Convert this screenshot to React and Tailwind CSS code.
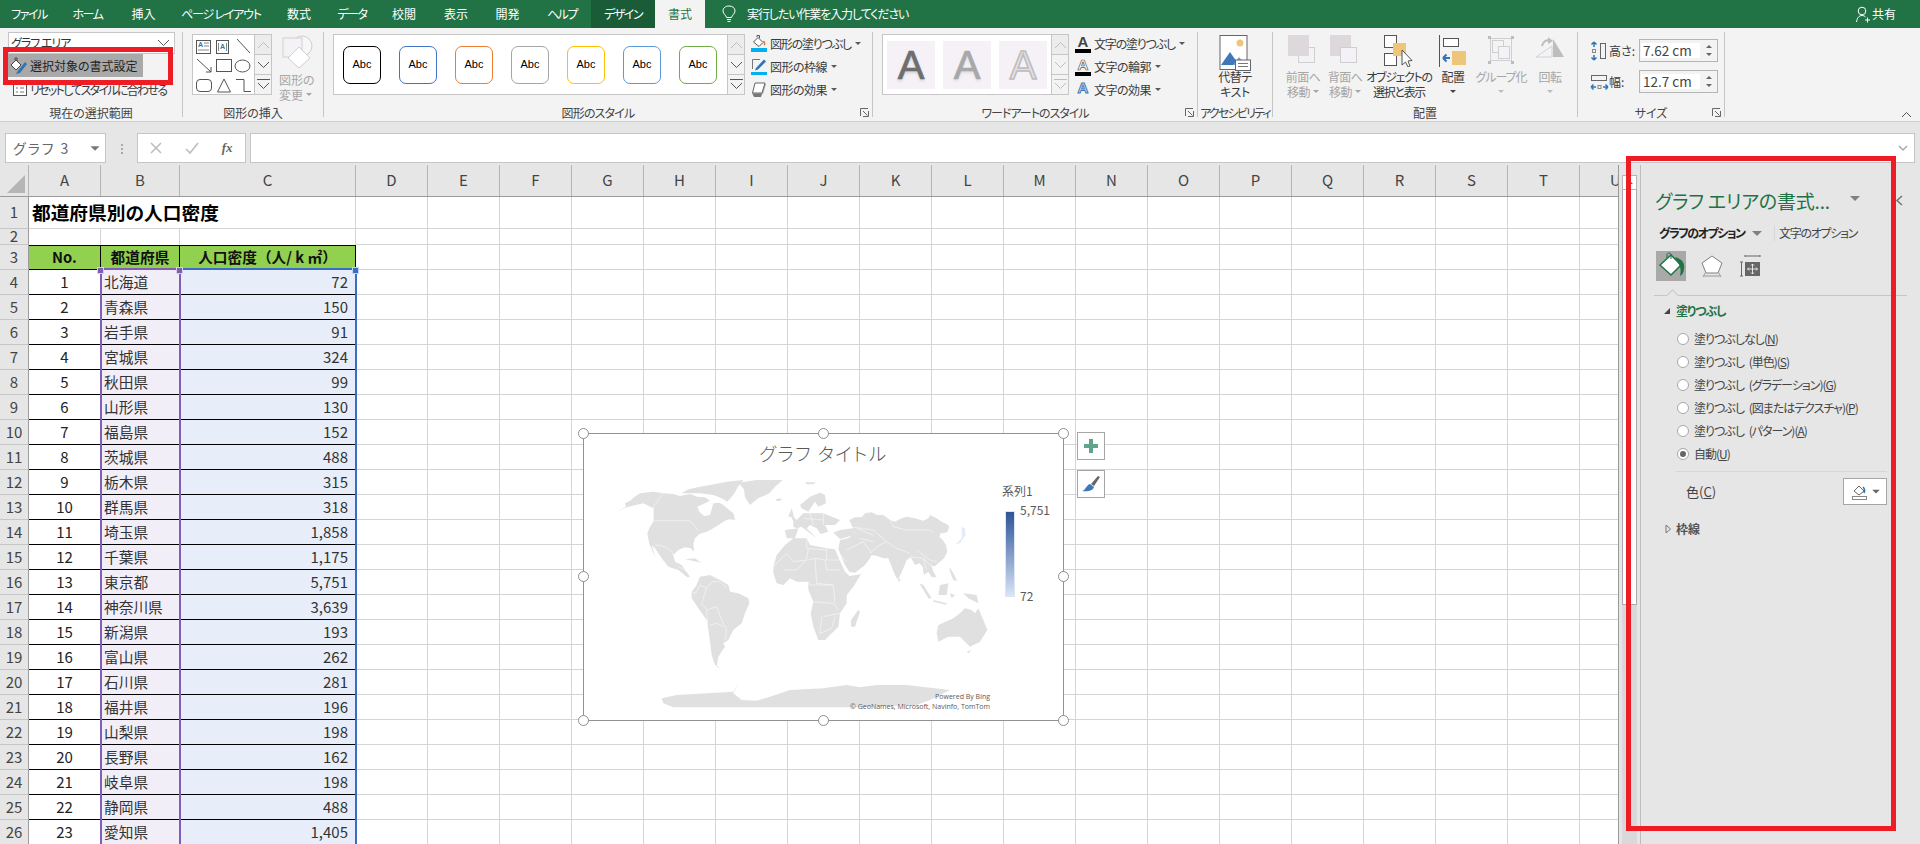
import React from 'react';

const JP = '"Noto Sans CJK JP", sans-serif';

const tabs = [
  ['ファイル', 'w-[58px] tracking-[-1.5px]'],
  ['ホーム', 'w-[59px] tracking-[-1.5px]'],
  ['挿入', 'w-[53px]'],
  ['ページ レイアウト', 'w-[102px] tracking-[-1.2px]'],
  ['数式', 'w-[54px]'],
  ['データ', 'w-[52px] tracking-[-1.5px]'],
  ['校閲', 'w-[52px]'],
  ['表示', 'w-[52px]'],
  ['開発', 'w-[51px]'],
  ['ヘルプ', 'w-[58px] tracking-[-1.5px]'],
];

const prefectures = [
  ['北海道', '72'], ['青森県', '150'], ['岩手県', '91'], ['宮城県', '324'], ['秋田県', '99'], ['山形県', '130'],
  ['福島県', '152'], ['茨城県', '488'], ['栃木県', '315'], ['群馬県', '318'], ['埼玉県', '1,858'], ['千葉県', '1,175'],
  ['東京都', '5,751'], ['神奈川県', '3,639'], ['新潟県', '193'], ['富山県', '262'], ['石川県', '281'], ['福井県', '196'],
  ['山梨県', '198'], ['長野県', '162'], ['岐阜県', '198'], ['静岡県', '488'], ['愛知県', '1,405'],
];

const extraCols = ['D', 'E', 'F', 'G', 'H', 'I', 'J', 'K', 'L', 'M', 'N', 'O', 'P', 'Q', 'R', 'S', 'T', 'U'];

const Caret = ({ className = 'border-t-[#595959]' }) => (
  <span className={`inline-block w-0 h-0 border-x-[3px] border-x-transparent border-t-[3px] ${className}`} />
);

const Launcher = () => (
  <svg width="9" height="9" viewBox="0 0 9 9" className="text-[#666]">
    <path d="M0.5 8V0.5H8M8.5 8.5H3M8.5 8.5V3M3 3L7.5 7.5" fill="none" stroke="currentColor" />
  </svg>
);

const GalleryScroll = ({ disabled = false }) => {
  const stroke = disabled ? '#bdbdbd' : '#555';
  return (
    <div className="w-[17px] h-[61px] flex flex-col border border-l-0 border-[#c6c6c6] bg-[#f3f3f3]">
      <div className="h-[20px] flex items-center justify-center border-b border-[#c6c6c6] bg-[#ececec]">
        <svg width="13" height="8" viewBox="0 0 13 8"><path d="M1 7L6.5 1.5L12 7" fill="none" stroke="#bdbdbd" /></svg>
      </div>
      <div className="h-[20px] flex items-center justify-center border-b border-[#c6c6c6]">
        <svg width="13" height="8" viewBox="0 0 13 8"><path d="M1 1L6.5 6.5L12 1" fill="none" stroke={stroke} /></svg>
      </div>
      <div className="flex-1 flex flex-col items-center justify-center gap-[2px]">
        <div className="w-[13px] h-px" style={{ background: stroke }} />
        <svg width="13" height="8" viewBox="0 0 13 8"><path d="M1 1L6.5 6.5L12 1" fill="none" stroke={stroke} /></svg>
      </div>
    </div>
  );
};

const ShapeGalleryIcons = () => (
  <svg width="62" height="61" viewBox="0 0 62 61" fill="none" stroke="#555">
    <rect x="3.5" y="5.5" width="14" height="13" />
    <text x="5" y="12" fontSize="7" fontWeight="700" fill="#2e75b6" stroke="none" fontFamily="Liberation Sans">A</text>
    <path d="M11 8H16M11 11H16M5 15H16" stroke="#888" />
    <rect x="23.5" y="5.5" width="12" height="13" />
    <path d="M25.5 8V16M33.5 8V16" stroke="#888" />
    <text x="27" y="14" fontSize="7" fontWeight="700" fill="#2e75b6" stroke="none" fontFamily="Liberation Sans">A</text>
    <path d="M44 4L57 18M4 24L18 37M18 37V32M18 37H13" />
    <rect x="23.5" y="24.5" width="15" height="12" />
    <ellipse cx="49.5" cy="31" rx="7.5" ry="6" />
    <rect x="3.5" y="44.5" width="15" height="12" rx="3.5" />
    <path d="M31 44L37.5 57H24.5Z" />
    <path d="M43 44.5H51V56.5H58" />
  </svg>
);

const CommandRow = ({ icon, label, tight = 'tracking-[-0.5px]' }) => (
  <div className="h-[23px] flex items-center">
    <div className="w-[19px] shrink-0 flex justify-start">{icon}</div>
    <span className={`text-[12px] whitespace-nowrap text-[#3a3a3a] ${tight}`}>{label}</span>
    <span className="ml-[4px] flex"><Caret /></span>
  </div>
);

const ShapeFillIcon = () => (
  <svg width="16" height="19" viewBox="0 0 16 19" fill="none">
    <path d="M2.5 8L7 3.5L12 8.5L8 12.5Z" fill="#fff" stroke="#555" />
    <path d="M6 3V1.5H8.5V4" stroke="#555" />
    <path d="M12.5 7C14 9 14 10.5 13 11" stroke="#e07b39" strokeWidth="1.5" />
    <rect y="14" width="16" height="4" fill="#00b0f0" />
  </svg>
);

const ShapeLineIcon = () => (
  <svg width="16" height="19" viewBox="0 0 16 19" fill="none">
    <path d="M1.5 12V2.5H9" stroke="#777" />
    <path d="M5 11L13 2.5L15 4.5L7 12.5L4 13.5Z" fill="#2e75b6" />
    <rect y="15" width="16" height="3" fill="#00b0f0" />
  </svg>
);

const ShapeEffectIcon = () => (
  <svg width="16" height="16" viewBox="0 0 16 16">
    <path d="M4 2H15L12 12H1Z" fill="#aaa" />
    <path d="M4 1H14L11 11H1.5Z" fill="#fff" stroke="#666" />
    <path d="M1.5 12H11L10 15H3Z" fill="#777" />
  </svg>
);

const TextLetterIcon = ({ bar = true, outlined = false, blue = false }) => (
  <div className="relative w-[16px] h-[19px] flex justify-center">
    <span
      className={`font-bold text-[15px] leading-[16px] ${blue ? 'text-[#dbe7f5] [-webkit-text-stroke:1px_#3f78b8]' : outlined ? 'text-white [-webkit-text-stroke:0.7px_#555]' : 'text-[#444]'}`}
      style={{ fontFamily: '"Liberation Sans"' }}
    >
      A
    </span>
    {bar && <div className="absolute left-0 right-0 bottom-0 h-[4px] bg-black" />}
  </div>
);

const AltTextIcon = () => (
  <svg width="32" height="36" viewBox="0 0 32 36">
    <rect x="1" y="0.5" width="27" height="34" fill="#fff" stroke="#666" />
    <circle cx="21" cy="8" r="3.5" fill="#eec67a" />
    <path d="M2 30L11 17L20 30Z" fill="#3f78b8" />
    <path d="M14 30L20 22L27 30Z" fill="#7aa5d6" />
    <rect x="16.5" y="25" width="15" height="10.5" fill="#fff" stroke="#666" />
    <path d="M19 28.5H29M19 31.5H29" stroke="#777" />
  </svg>
);

const DisabledStack = ({ front }) => (
  <svg width="30" height="31" viewBox="0 0 30 31">
    {front ? (
      <>
        <rect x="10.5" y="12.5" width="16" height="15" fill="#f4f2f6" stroke="#cfcfcf" />
        <rect x="0" y="0" width="21" height="21" fill="#dcd8dc" />
      </>
    ) : (
      <>
        <rect x="0" y="0" width="21" height="21" fill="#dcd8dc" />
        <rect x="10.5" y="12.5" width="16" height="15" fill="#f4f2f6" stroke="#cfcfcf" />
      </>
    )}
  </svg>
);

const SelectionPaneIcon = () => (
  <svg width="30" height="32" viewBox="0 0 30 32">
    <rect x="0.5" y="0.5" width="12" height="12" fill="#fff" stroke="#555" />
    <rect x="0.5" y="18.5" width="12" height="12" fill="#fff" stroke="#555" />
    <rect x="9" y="8" width="13" height="13" fill="#eec67a" />
    <path d="M18 15V30L21.5 27L24 32L26 31L24 26L28 25.5Z" fill="#fff" stroke="#555" />
  </svg>
);

const AlignIcon = () => (
  <svg width="28" height="32" viewBox="0 0 28 32">
    <path d="M0.5 0V32" stroke="#555" />
    <rect x="4.5" y="3.5" width="15" height="8" fill="#fff" stroke="#555" />
    <rect x="13" y="16" width="14" height="14" fill="#eec67a" />
    <path d="M11 23H4M4 23L7.5 19.5M4 23L7.5 26.5" fill="none" stroke="#2e75b6" strokeWidth="2" />
  </svg>
);

const GroupIcon = () => (
  <svg width="28" height="30" viewBox="0 0 28 30" fill="none" stroke="#cfcfcf">
    <rect x="3.5" y="3.5" width="21" height="22" />
    <rect x="5.5" y="5.5" width="11" height="12" fill="#f4f2f6" />
    <rect x="11.5" y="11.5" width="11" height="12" fill="#f4f2f6" />
    <g fill="#bdbdbd" stroke="none">
      <rect x="1" y="1" width="3" height="3" /><rect x="24" y="1" width="3" height="3" />
      <rect x="1" y="26" width="3" height="3" /><rect x="24" y="26" width="3" height="3" />
    </g>
  </svg>
);

const RotateIcon = () => (
  <svg width="30" height="30" viewBox="0 0 30 30">
    <path d="M18 4L29 22H18Z" fill="#bdbdbd" />
    <path d="M1 22L17 11V22Z" fill="#f4f2f6" stroke="#d2d2d2" />
    <path d="M7 11C8 6 12 4 16 6" fill="none" stroke="#bdbdbd" strokeWidth="2" />
    <path d="M13 2L18 6L13 9Z" fill="#bdbdbd" />
  </svg>
);

const LargeButton = ({ width, icon, lines, dark, caret = true, soloCaret = false, tight = 'tracking-[-0.5px]' }) => (
  <div className={`${width} flex flex-col items-center`}>
    <div className="h-[36px] pt-[3px] flex items-start justify-center">{icon}</div>
    <div className={`mt-[1px] text-[12px] leading-[15px] text-center whitespace-nowrap ${tight} ${dark ? 'text-[#3a3a3a]' : 'text-[#a6a6a6]'}`}>
      <div>{lines[0]}</div>
      {lines[1] ? (
        <div className="flex items-center justify-center gap-[3px]">
          <span>{lines[1]}</span>
          {caret && <Caret className="border-t-[#a6a6a6]" />}
        </div>
      ) : (
        soloCaret && (
          <div className="h-[15px] flex items-center justify-center">
            <Caret className={dark ? 'border-t-[#444]' : 'border-t-[#bdbdbd]'} />
          </div>
        )
      )}
    </div>
  </div>
);

const SizeInput = ({ value }) => (
  <div className="w-[79px] h-[23px] border border-[#b5b5b5] flex bg-[#f3f3f3]">
    <div className="w-[59px] my-[3px] ml-px bg-white text-[13.5px] leading-[15px] text-[#444] flex items-center pl-[2px]">{value}</div>
    <div className="flex-1 flex flex-col items-center justify-center gap-[5px]">
      <span className="w-0 h-0 border-x-[3px] border-x-transparent border-b-[3px] border-b-[#666]" />
      <span className="w-0 h-0 border-x-[3px] border-x-transparent border-t-[3px] border-t-[#666]" />
    </div>
  </div>
);

const Group = ({ width, label, launcher, tight = '', children }) => (
  <div className={`${width} h-[85px] mt-[4px] border-r border-[#c6c6c6] flex flex-col shrink-0`}>
    <div className="h-[72px] shrink-0">{children}</div>
    <div className={`relative h-[18px] shrink-0 flex items-center justify-center text-[12px] text-[#444] whitespace-nowrap ${tight}`}>
      {label}
      {launcher && <div className="absolute right-[3px] bottom-[5px] flex"><Launcher /></div>}
    </div>
  </div>
);

const Ribbon = () => (
  <div className="h-[93px] bg-[#f3f3f3] flex">
    <Group width="w-[183px]" label="現在の選択範囲">
      <div className="pl-[8px]">
        <div className="w-[167px] h-[22px] bg-white border border-[#c6c6c6] flex items-center justify-between pl-[2px] pr-[4px] text-[12px] tracking-[-1px] text-[#333]">
          <span>グラフ エリア</span>
          <svg width="13" height="8" viewBox="0 0 13 8"><path d="M1 1L6.5 6.5L12 1" fill="none" stroke="#555" /></svg>
        </div>
        <div className="w-[135px] h-[23px] bg-[#a9a9a9] flex items-center text-[12px] text-[#222]">
          <svg width="20" height="18" viewBox="0 0 20 18" className="mr-[2px] shrink-0">
            <path d="M3 8L8 3L13 8L8 13Z" fill="#fff" stroke="#444" />
            <path d="M7 3V1H9V4" stroke="#444" fill="none" />
            <path d="M9 15L17 5L19 7L12 16L8 17Z" fill="#2e75b6" />
          </svg>
          選択対象の書式設定
        </div>
        <div className="h-[21px] mt-[2px] flex items-center text-[12px] tracking-[-1.7px] text-[#3a3a3a] whitespace-nowrap">
          <svg width="20" height="16" viewBox="0 0 20 16" className="mr-[2px] shrink-0">
            <rect x="0" y="0" width="5" height="3" fill="#2e75b6" />
            <rect x="5.5" y="2.5" width="13" height="11" fill="#fff" stroke="#555" />
            <path d="M8 6H10M12 6H16M8 10H10M12 10H16" stroke="#777" />
          </svg>
          リセットしてスタイルに合わせる
        </div>
      </div>
    </Group>

    <Group width="w-[141px]" label="図形の挿入">
      <div className="flex pl-[9px] pt-[2px]">
        <div className="w-[63px] h-[61px] bg-white border border-[#c6c6c6]"><ShapeGalleryIcons /></div>
        <GalleryScroll />
        <div className="ml-[7px] flex flex-col items-center">
          <svg width="34" height="35" viewBox="0 0 34 35" fill="none" stroke="#cfcfcf">
            <circle cx="22" cy="12" r="10" fill="#f7f7f7" />
            <rect x="3" y="4" width="19" height="19" fill="#f4f2f6" />
            <path d="M19 13L30 24L19 34L8 24Z" fill="#fff" />
          </svg>
          <div className="mt-[3px] text-[12px] leading-[15px] text-[#a6a6a6] text-center whitespace-nowrap">
            図形の
            <div className="flex items-center gap-[3px]">変更 <Caret className="border-t-[#a6a6a6]" /></div>
          </div>
        </div>
      </div>
    </Group>

    <Group width="w-[549px]" label="図形のスタイル" launcher tight="tracking-[-0.8px]">
      <div className="flex pl-[9px] pt-[2px]">
        <div className="w-[395px] h-[61px] bg-white border border-[#c6c6c6] flex items-center gap-[18px] pl-[9px]">
          {['border-black', 'border-[#4472c4]', 'border-[#ed7d31]', 'border-[#a5a5a5]', 'border-[#ffc000]', 'border-[#5b9bd5]', 'border-[#70ad47]'].map((c) => (
            <div key={c} className={`w-[38px] h-[38px] rounded-[7px] border-[1.5px] ${c} flex items-center justify-center text-[11px] text-black`} style={{ fontFamily: '"Liberation Sans"' }}>
              Abc
            </div>
          ))}
        </div>
        <GalleryScroll />
        <div className="ml-[6px] -mt-[2px] flex flex-col">
          <CommandRow icon={<ShapeFillIcon />} label="図形の塗りつぶし" tight="tracking-[-1.2px]" />
          <CommandRow icon={<ShapeLineIcon />} label="図形の枠線" />
          <CommandRow icon={<ShapeEffectIcon />} label="図形の効果" />
        </div>
      </div>
    </Group>

    <Group width="w-[325px]" label="ワードアートのスタイル" launcher tight="tracking-[-1px]">
      <div className="flex pl-[9px] pt-[2px]">
        <div className="w-[170px] h-[61px] bg-white border border-[#c6c6c6] flex items-center gap-[8px] pl-[4px]">
          {[
            'text-[#6e6e6e] [-webkit-text-stroke:0.7px_#6e6e6e] [text-shadow:0_2px_3px_#d0d0d0]',
            'text-[#a8a8a8] [-webkit-text-stroke:0.7px_#a8a8a8] [text-shadow:0_2px_3px_#dcdcdc]',
            'text-[#e2e0e4] [-webkit-text-stroke:1.5px_#bcbcbc]',
          ].map((c) => (
            <div key={c} className={`w-[48px] h-[48px] bg-[#f5f1f7] flex items-center justify-center text-[40px] leading-none tracking-normal ${c}`} style={{ fontFamily: '"Liberation Sans"' }}>
              A
            </div>
          ))}
        </div>
        <GalleryScroll disabled />
        <div className="ml-[6px] -mt-[2px] flex flex-col">
          <CommandRow icon={<TextLetterIcon />} label="文字の塗りつぶし" tight="tracking-[-1.2px]" />
          <CommandRow icon={<TextLetterIcon outlined />} label="文字の輪郭" />
          <CommandRow icon={<TextLetterIcon bar={false} blue />} label="文字の効果" />
        </div>
      </div>
    </Group>

    <Group width="w-[75px]" label="アクセシビリティ" tight="tracking-[-1.8px]">
      <LargeButton width="w-full" icon={<AltTextIcon />} lines={['代替テ', 'キスト']} dark caret={false} />
    </Group>

    <Group width="w-[305px]" label="配置">
      <div className="flex pl-[9px]">
        <LargeButton width="w-[42px]" icon={<DisabledStack front />} lines={['前面へ', '移動']} />
        <LargeButton width="w-[42px]" icon={<DisabledStack />} lines={['背面へ', '移動']} />
        <LargeButton width="w-[66px]" icon={<SelectionPaneIcon />} lines={['オブジェクトの', '選択と表示']} dark caret={false} tight="tracking-[-1.3px]" />
        <LargeButton width="w-[42px]" icon={<AlignIcon />} lines={['配置']} dark soloCaret />
        <LargeButton width="w-[54px]" icon={<GroupIcon />} lines={['グループ化']} soloCaret tight="tracking-[-1px]" />
        <LargeButton width="w-[44px]" icon={<RotateIcon />} lines={['回転']} soloCaret />
      </div>
    </Group>

    <Group width="w-[147px]" label="サイズ" launcher>
      <div className="pl-[12px] pt-[7px] flex flex-col gap-[8px]">
        <div className="flex items-center">
          <svg width="19" height="20" viewBox="0 0 19 20" fill="none" className="shrink-0">
            <rect x="10.5" y="2.5" width="5" height="15" stroke="#666" />
            <path d="M4 1V6M4 1L1.5 3.5M4 1L6.5 3.5M4 19V14M4 19L1.5 16.5M4 19L6.5 16.5" stroke="#2e75b6" strokeWidth="1.5" />
            <rect x="2.5" y="8.5" width="3" height="3" stroke="#888" />
          </svg>
          <span className="w-[30px] text-[12px] text-[#3a3a3a]">高さ:</span>
          <SizeInput value="7.62 cm" />
        </div>
        <div className="flex items-center">
          <svg width="19" height="20" viewBox="0 0 19 20" fill="none" className="shrink-0">
            <rect x="1.5" y="3.5" width="15" height="5" stroke="#666" />
            <path d="M1 15H6M1 15L3.5 12.5M1 15L3.5 17.5M18 15H13M18 15L15.5 12.5M18 15L15.5 17.5" stroke="#2e75b6" strokeWidth="1.5" />
            <rect x="8" y="13.5" width="3" height="3" stroke="#888" />
          </svg>
          <span className="w-[30px] text-[12px] text-[#3a3a3a]">幅:</span>
          <SizeInput value="12.7 cm" />
        </div>
      </div>
    </Group>

    <div className="flex-1 flex items-end justify-end pr-[8px] pb-[3px]">
      <svg width="11" height="7" viewBox="0 0 11 7"><path d="M1 6L5.5 1.5L10 6" fill="none" stroke="#555" /></svg>
    </div>
  </div>
);

const FormulaBar = () => (
  <div className="h-[44px] bg-[#e6e6e6] border-t border-[#d0d0d0] flex pt-[11px] pl-[5px] pr-[5px]">
    <div className="w-[101px] h-[30px] bg-white border border-[#c6c6c6] flex items-center justify-between pl-[7px] pr-[7px] text-[14px] tracking-[2px] text-[#666]">
      グラフ 3
      <Caret className="border-t-[#777] scale-150" />
    </div>
    <div className="w-[31px] flex flex-col items-center justify-center gap-[2px]">
      <div className="w-[2px] h-[2px] bg-[#aaa]" />
      <div className="w-[2px] h-[2px] bg-[#aaa]" />
      <div className="w-[2px] h-[2px] bg-[#aaa]" />
    </div>
    <div className="w-[109px] h-[30px] bg-white border border-[#c6c6c6] flex items-center">
      <span className="w-[36px] flex justify-center"><svg width="12" height="12" viewBox="0 0 12 12"><path d="M1 1L11 11M11 1L1 11" stroke="#bdbdbd" strokeWidth="1.6" /></svg></span>
      <span className="w-[36px] flex justify-center"><svg width="14" height="12" viewBox="0 0 14 12"><path d="M1 7L5 11L13 1" fill="none" stroke="#bdbdbd" strokeWidth="1.6" /></svg></span>
      <span className="w-[36px] text-center text-[13px] italic text-[#666] font-bold" style={{ fontFamily: '"Liberation Serif"' }}>fx</span>
    </div>
    <div className="flex-1 ml-[4px] h-[30px] bg-white border border-[#c6c6c6] flex items-center justify-end pr-[6px]">
      <svg width="10" height="7" viewBox="0 0 10 7"><path d="M1 1L5 5L9 1" fill="none" stroke="#aaa" strokeWidth="1.5" /></svg>
    </div>
  </div>
);

const RowHead = ({ n }) => (
  <div className="w-[29px] shrink-0 h-full bg-[#e6e6e6] border-r border-b border-r-[#9b9b9b] border-b-[#c6c6c6] flex items-center justify-center text-[15px] text-[#444] overflow-hidden">
    {n}
  </div>
);

const GridCells = () => (
  <>
    {extraCols.map((c) => (
      <div key={c} className="w-[72px] shrink-0 h-full border-r border-b border-[#d4d4d4]" />
    ))}
  </>
);

const headCell = 'shrink-0 bg-[#92d050] border-t border-r border-t-black border-r-black flex items-center justify-center text-[14.7px] font-bold text-[#111]';

const Sheet = () => (
  <div className="relative w-[1619px] shrink-0 overflow-hidden border-r border-[#999] [font-feature-settings:normal]">
    <div className="h-[32px] flex bg-[#e6e6e6] border-b border-[#9b9b9b] text-[15px] text-[#444]">
      <div className="w-[29px] shrink-0 relative border-r border-[#b5b5b5]">
        <div className="absolute right-[3px] bottom-[3px] w-0 h-0 border-l-[18px] border-l-transparent border-b-[18px] border-b-[#b5b5b5]" />
      </div>
      {[['A', 'w-[72px]'], ['B', 'w-[79px]'], ['C', 'w-[176px]']].map(([c, w]) => (
        <div key={c} className={`${w} shrink-0 border-r border-[#b5b5b5] flex items-center justify-center`}>{c}</div>
      ))}
      {extraCols.map((c) => (
        <div key={c} className="w-[72px] shrink-0 border-r border-[#b5b5b5] flex items-center justify-center">{c}</div>
      ))}
    </div>

    <div className="h-[32px] flex">
      <RowHead n={1} />
      <div className="w-[327px] shrink-0 border-r border-b border-[#d4d4d4] flex items-center pl-[3px] text-[18.7px] font-bold text-black">都道府県別の人口密度</div>
      <GridCells />
    </div>
    <div className="h-[16px] flex">
      <RowHead n={2} />
      <div className="w-[72px] shrink-0 border-r border-[#d4d4d4]" />
      <div className="w-[79px] shrink-0 border-r border-[#d4d4d4]" />
      <div className="w-[176px] shrink-0 border-r border-[#d4d4d4]" />
      <GridCells />
    </div>
    <div className="h-[25px] flex">
      <RowHead n={3} />
      <div className={`w-[72px] border-b border-b-black ${headCell}`}>No.</div>
      <div className={`w-[79px] border-b-[2px] border-b-[#7f5fb5] ${headCell}`}>都道府県</div>
      <div className={`w-[176px] border-b-[2px] border-b-[#3a6cc8] ${headCell}`}>人口密度（人/ k ㎡）</div>
      <GridCells />
    </div>

    {prefectures.map(([name, value], i) => (
      <div key={name} className="h-[25px] flex">
        <RowHead n={i + 4} />
        <div className="w-[71px] shrink-0 border-b border-black flex items-center justify-center text-[15px] text-[#222]">{i + 1}</div>
        <div className="w-[81px] shrink-0 bg-[#f2eef8] border-x-2 border-[#7f5fb5] flex">
          <div className="flex-1 border-b border-black flex items-center pl-[2px] text-[14.7px] text-[#333]">{name}</div>
        </div>
        <div className="w-[176px] shrink-0 bg-[#e8eef9] border-r-2 border-[#3a6cc8] flex">
          <div className="flex-1 border-b border-black flex items-center justify-end pr-[7px] text-[15px] text-[#333]">{value}</div>
        </div>
        <div className="w-[71px] shrink-0 h-full border-r border-b border-[#d4d4d4]" />
        {extraCols.slice(1).map((c) => (
          <div key={c} className="w-[72px] shrink-0 h-full border-r border-b border-[#d4d4d4]" />
        ))}
      </div>
    ))}

    {/* 範囲選択のハンドル */}
    <div className="absolute left-[97px] top-[102px] w-[7px] h-[7px] bg-[#7f5fb5] border border-white/70" />
    <div className="absolute left-[176px] top-[102px] w-[7px] h-[7px] bg-[#7f5fb5] border border-white/70" />
    <div className="absolute left-[352px] top-[102px] w-[7px] h-[7px] bg-[#3a6cc8] border border-white/70" />
  </div>
);

const MapLand = ({ points, fill = '#e0e0e0' }) => <polygon points={points} fill={fill} />;

// 世界地図: 座標はズーム画像(3倍)のまま
const WorldMap = () => (
  <svg viewBox="0 0 1200 750" className="absolute left-[26px] top-[36px] w-[400px] h-[250px]">
    <g>
      <MapLand points="20,125 48,110 45,100 60,92 72,82 90,70 130,65 160,70 190,72 210,78 240,72 262,80 285,82 300,92 285,100 262,110 268,125 282,138 300,135 305,118 310,100 328,98 340,105 355,118 370,130 375,150 358,148 345,152 325,165 305,178 290,185 268,192 255,205 250,220 252,245 242,235 225,232 205,240 190,255 195,275 215,285 225,300 240,320 232,322 205,300 175,290 155,265 135,235 125,225 136,262 118,222 112,190 120,170 130,155 130,115 100,100 50,112" />
      <MapLand points="215,70 235,58 270,50 300,45 350,35 400,30 385,48 372,72 352,95 335,85 310,75 270,70" />
      <MapLand points="385,38 440,30 518,30 495,50 478,70 445,85 420,105 405,82 402,58" />
      <MapLand points="225,268 255,265 275,280 262,275" />
      <MapLand points="270,320 300,315 330,330 355,345 360,365 385,370 415,385 418,400 405,430 395,460 370,480 355,510 340,520 345,530 325,560 320,590 335,595 315,585 305,555 298,500 290,450 265,415 245,385 245,365 260,345" />
      <MapLand points="497,88 515,85 512,92 500,93" />
      <path d="M160,70 L130,110 V150 M130,152 H240 L265,182 M135,225 L165,230 L185,245 L190,256 M205,290 L225,300 M270,345 L290,355 L275,400 L290,420 L295,500 L303,555 M270,345 L258,370 L245,365 M290,355 L305,335 L330,335 L352,355 M290,420 L320,410 L335,450 L350,480 L345,510 M320,460 L340,470 M300,465 L320,460" fill="none" stroke="#fff" strokeWidth="1.5" />
    </g>
    <g transform="translate(540 0)">
      <MapLand points="-50,290 -40,255 -15,225 10,205 50,205 60,225 110,235 135,238 145,262 165,305 178,318 213,313 190,350 170,375 170,400 150,430 145,470 120,495 105,510 85,510 70,470 62,430 70,395 55,360 55,335 20,335 0,325 -20,345 -40,340 -50,310" />
      <MapLand points="205,420 210,425 195,470 183,470 183,450" />
      <MapLand points="-15,180 25,175 15,205 -10,205" />
      <MapLand points="10,155 0,130 20,150 40,130 60,130 100,130 150,150 135,165 105,165 115,185 92,192 80,175 60,165 50,175 80,205 60,190 35,170 20,175 10,170" />
      <MapLand points="30,105 60,80 90,68 105,75 108,100 85,110 75,95 55,125 45,120 35,115" />
      <MapLand points="5,115 12,142 -5,140" />
      <MapLand points="45,37 78,37 70,43 50,43" />
      <MapLand points="178,150 195,142 215,142 225,130 245,127 262,135 280,135 300,150 315,155 335,145 350,140 375,145 400,152 415,145 420,135 440,145 455,155 470,162 478,170 472,185 462,190 452,190 448,200 458,210 468,225 472,245 462,265 445,280 432,290 425,285 430,305 440,322 425,322 415,305 402,315 398,290 388,280 375,285 362,262 350,270 340,295 325,328 318,322 305,290 295,265 280,265 262,258 245,255 240,265 225,285 195,308 178,305 165,285 145,238 150,210 175,205 195,190" />
      <MapLand points="130,188 150,180 190,175 195,195 150,207" />
      <MapLand points="515,170 525,175 527,195 510,220 498,222 515,205" fill="#e4ecf9" />
      <MapLand points="388,340 400,345 425,385 415,385" />
      <MapLand points="430,390 470,400 468,404 430,395" />
      <MapLand points="450,345 475,340 470,375 445,375" />
      <MapLand points="520,370 560,375 565,400 535,385" />
      <MapLand points="480,370 495,375 485,385" />
      <MapLand points="478,290 490,310 502,332 490,330 480,305" />
      <MapLand points="325,322 332,330 325,337" />
      <MapLand points="445,465 490,445 510,430 525,415 545,420 555,430 565,415 580,450 592,480 570,515 540,530 525,515 510,500 475,500 445,515 440,490" />
      <MapLand points="530,545 545,540 535,550" />
      <MapLand points="-385,685 -340,675 -170,665 -155,640 -170,670 -145,690 -100,692 -60,680 0,660 100,655 170,645 210,652 260,645 350,645 480,660 420,690 380,705 200,712 -200,712 -350,712 -380,700" />
      <path d="M-50,290 L-10,250 L10,275 L50,270 L55,235 M50,205 V235 L110,240 M110,235 V270 L150,270 M55,270 L75,265 L105,270 L110,300 L150,300 M75,265 L80,340 L130,345 L135,400 M55,335 L60,345 L130,345 M70,395 L130,400 L145,420 M100,440 L150,430 M95,440 L90,490 L125,475 L135,440 M-20,300 L20,300 L50,270 M150,255 L170,275 M60,130 L70,165 M100,130 L100,165 M40,145 L100,150 M178,170 L250,180 L290,215 L320,235 L360,250 M300,150 L310,170 L350,180 L420,180 L430,190 M290,215 L260,230 L240,250 M210,205 L250,215 M170,240 L220,215 L245,250 M360,260 L400,265 L410,300 M380,240 L420,270 L440,275 M400,265 L430,295 M200,175 L250,195" fill="none" stroke="#fff" strokeWidth="1.5" />
    </g>
  </svg>
);

const Handle = ({ className }) => (
  <div className={`absolute w-[11px] h-[11px] rounded-full bg-white border-[1.5px] border-[#8f8f8f] ${className}`} />
);

const Chart = () => (
  <div className="absolute left-[583px] top-[268px] w-[481px] h-[288px] bg-white border-[1.5px] border-[#929292]">
    <div className="absolute left-0 right-0 top-[6px] text-center text-[18.5px] leading-[26px] font-light text-[#595959] tracking-[1.5px]">グラフ タイトル</div>
    <WorldMap />
    <div className="absolute left-[418px] top-[49px] text-[12px] leading-[16px] text-[#595959]">系列1</div>
    <div className="absolute left-[421px] top-[77px] w-[10px] h-[86px] border border-[#dbe5f4] bg-gradient-to-b from-[#2f5597] to-[#dae5f6]" />
    <div className="absolute left-[436px] top-[68px] text-[12px] leading-[16px] text-[#595959]">5,751</div>
    <div className="absolute left-[436px] top-[154px] text-[12px] leading-[16px] text-[#595959]">72</div>
    <div className="absolute right-[73px] top-[258px] text-[7px] leading-[10px] text-[#595959] text-right whitespace-nowrap" style={{ fontFamily: '"Open Sans"' }}>
      Powered By Bing
      <br />© GeoNames, Microsoft, Navinfo, TomTom
    </div>
    <Handle className="-left-[6px] -top-[6px]" />
    <Handle className="left-[234px] -top-[6px]" />
    <Handle className="-right-[6px] -top-[6px]" />
    <Handle className="-left-[6px] top-[137px]" />
    <Handle className="-right-[6px] top-[137px]" />
    <Handle className="-left-[6px] -bottom-[6px]" />
    <Handle className="left-[234px] -bottom-[6px]" />
    <Handle className="-right-[6px] -bottom-[6px]" />
    <div className="absolute left-[493px] -top-[2px] w-[28px] h-[28px] bg-white border border-[#a6a6a6] flex items-center justify-center">
      <svg width="16" height="16" viewBox="0 0 16 16"><path d="M6 1H10V6H15V10H10V15H6V10H1V6H6Z" fill="#5ea58a" /></svg>
    </div>
    <div className="absolute left-[493px] top-[36px] w-[28px] h-[28px] bg-white border border-[#a6a6a6] flex items-center justify-center">
      <svg width="20" height="20" viewBox="0 0 20 20">
        <path d="M10 10L17 2L19 3L13 12Z" fill="#666" />
        <path d="M1 17C5 16 5 11 9 10L13 13C12 17 6 18 1 17Z" fill="#3f78b8" />
      </svg>
    </div>
  </div>
);

const radios = ['塗りつぶしなし', '塗りつぶし (単色)', '塗りつぶし (グラデーション)', '塗りつぶし (図またはテクスチャ)', '塗りつぶし (パターン)', '自動'];
const radioKeys = ['N', 'S', 'G', 'P', 'A', 'U'];

const Radio = ({ label, hotkey, checked }) => (
  <div className="h-[23px] flex items-center">
    <span className="w-[12px] h-[12px] rounded-full border border-[#a8a8a8] bg-white flex items-center justify-center">
      {checked && <span className="w-[6px] h-[6px] rounded-full bg-[#666]" />}
    </span>
    <span className="ml-[5px] text-[12px] tracking-[-1px] [word-spacing:3px] text-[#444] whitespace-nowrap">
      {label}(<span className="underline">{hotkey}</span>)
    </span>
  </div>
);

const FormatPanel = () => (
  <div className="flex-1 bg-[#e6e6e6] border-l border-[#bdbdbd] overflow-hidden">
    <div className="h-[26px]" />
    <div className="pl-[14px] flex items-center h-[20px] relative">
      <span className="text-[19px] leading-[20px] tracking-[-0.2px] text-[#217346] whitespace-nowrap">グラフ エリアの書式...</span>
      <span className="absolute left-[209px] top-[5px] w-0 h-0 border-x-[5px] border-x-transparent border-t-[5px] border-t-[#808080]" />
      <svg width="8" height="11" viewBox="0 0 8 11" className="absolute left-[254px] top-[4px]"><path d="M7 1L2 5.5L7 10" fill="none" stroke="#777" strokeWidth="1.6" /></svg>
    </div>
    <div className="pl-[18px] mt-[14px] h-[16px] flex items-center text-[12px] text-[#444] whitespace-nowrap">
      <span className="w-[93px] font-bold text-[#222] tracking-[-1.5px]">グラフのオプション</span>
      <span className="w-0 h-0 border-x-[5px] border-x-transparent border-t-[5px] border-t-[#808080]" />
      <span className="ml-[12px] mr-[4px] w-px h-[16px] bg-[#d6d6d6]" />
      <span className="tracking-[-1.3px]">文字のオプション</span>
    </div>
    <div className="pl-[15px] mt-[10px] flex items-center h-[30px]">
      <div className="w-[30px] h-[30px] bg-[#a9a9a9] flex items-center justify-center">
        <svg width="30" height="30" viewBox="0 0 30 30" fill="none">
          <path d="M4 14L15 4L25 14L15 24Z" fill="#fff" stroke="#217346" strokeWidth="1.5" />
          <path d="M11 7V3.5C11 1.5 15 1.5 15 3.5V8" stroke="#217346" />
          <path d="M19 6C26 8 29 12 28 18C27.5 22 26 24 24 25C25 20 25 16 22 12Z" fill="#217346" />
        </svg>
      </div>
      <svg width="24" height="24" viewBox="0 0 24 24" fill="none" className="ml-[14px]">
        <path d="M12 2L22 9L18 19H6L2 9Z" fill="#fff" stroke="#808080" />
        <path d="M5 19L3 23M19 19L21 23M4 22H20" stroke="#999" />
      </svg>
      <svg width="24" height="24" viewBox="0 0 24 24" fill="none" className="ml-[15px]">
        <path d="M6 1V3M21 1V3M6 2H21" stroke="#666" />
        <rect x="6" y="8" width="15" height="14" fill="#666" />
        <path d="M1 8H4M1 22H4M2.5 8V22" stroke="#666" />
        <path d="M13.5 10V20M8.5 15H18.5M13.5 10L12 11.5M13.5 10L15 11.5M13.5 20L12 18.5M13.5 20L15 18.5M8.5 15L10 13.5M8.5 15L10 16.5M18.5 15L17 13.5M18.5 15L17 16.5" stroke="#fff" strokeWidth="0.8" />
      </svg>
    </div>
    <div className="relative mt-[14px] ml-[13px] mr-[13px] h-px bg-[#c6c6c6]">
      <div className="absolute left-[14px] -top-[4px] w-[9px] h-[9px] rotate-45 bg-[#e6e6e6] border-l border-t border-[#c6c6c6]" />
    </div>
    <div className="mt-[6px] h-[18px] flex items-center pl-[23px] text-[12px] tracking-[-1.2px] font-bold text-[#217346]">
      <span className="w-[12px]"><span className="block w-0 h-0 border-l-[6px] border-l-transparent border-b-[6px] border-b-[#444]" /></span>
      塗りつぶし
    </div>
    <div className="mt-[7px] ml-[36px] flex flex-col">
      {radios.map((r, i) => <Radio key={r} label={r} hotkey={radioKeys[i]} checked={i === 5} />)}
    </div>
    <div className="ml-[35px] mr-[33px] mt-[6px] h-px bg-[#d6d6d6]" />
    <div className="mt-[6px] flex items-center h-[27px] pl-[45px] pr-[33px] justify-between text-[13px] text-[#444]">
      <span>色(<span className="underline">C</span>)</span>
      <div className="w-[44px] h-[27px] bg-white border border-[#a6a6a6] flex items-center justify-center gap-[4px]">
        <svg width="18" height="18" viewBox="0 0 18 18" fill="none">
          <path d="M3 8L8 3L13 8L8 12Z" fill="#fff" stroke="#666" />
          <path d="M12 4C14 6 14 8 13 10" stroke="#2e75b6" strokeWidth="1.5" />
          <rect x="1.5" y="13.5" width="14" height="3" stroke="#888" />
        </svg>
        <Caret className="border-t-[#666] scale-125" />
      </div>
    </div>
    <div className="mt-[15px] h-[18px] flex items-center pl-[24px] text-[12px] font-bold text-[#555]">
      <svg width="11" height="10" viewBox="0 0 11 10" fill="none"><path d="M1 1L5.5 5L1 9Z" stroke="#777" /></svg>
      枠線
    </div>
  </div>
);

const App = () => (
  <div className="relative h-[844px] w-[1920px] overflow-hidden bg-white flex flex-col [font-feature-settings:'palt']" style={{ fontFamily: JP }}>
    <div className="h-[28px] bg-[#217346] flex items-center text-white text-[12px] shrink-0">
      {tabs.map(([t, w]) => (
        <div key={t} className={`${w} text-center whitespace-nowrap`}>{t}</div>
      ))}
      <div className="w-[64px] h-full bg-[#1a5c38] flex items-center justify-center tracking-[-1.5px]">デザイン</div>
      <div className="w-[50px] h-full bg-[#f3f3f3] text-[#217346] flex items-center justify-center">書式</div>
      <svg width="14" height="18" viewBox="0 0 14 18" fill="none" className="ml-[17px]">
        <path d="M4.5 12.5C4 10 1 9 1 5.8C1 3 3.5 1 7 1C10.5 1 13 3 13 5.8C13 9 10 10 9.5 12.5ZM5 14.5H9M5.5 16.5H8.5" stroke="#fff" />
      </svg>
      <span className="ml-[11px] whitespace-nowrap tracking-[-1.1px]">実行したい作業を入力してください</span>
      <div className="flex-1 flex items-center justify-end pr-[24px]">
        <svg width="14" height="17" viewBox="0 0 14 17" fill="none" className="mr-[2px]">
          <circle cx="6" cy="5" r="3.8" stroke="#fff" />
          <path d="M0.5 16C1 12 3 9.5 6 9.5C7.5 9.5 8.5 10 9.5 11M9 14H14M11.5 11.5V16.5" stroke="#fff" />
        </svg>
        共有
      </div>
    </div>

    <Ribbon />
    <FormulaBar />

    <div className="relative flex-1 flex min-h-0">
      <Sheet />
      <div className="w-[21px] shrink-0 bg-[#e6e6e6] pl-[3px] pr-[3px] pt-[10px] flex">
        <div className="w-[15px] h-full bg-[#d9d9d9]">
          <div className="w-[15px] h-[15px] bg-white border border-[#b5b5b5] flex items-center justify-center">
            <span className="w-0 h-0 border-x-[3px] border-x-transparent border-b-[3px] border-b-[#666]" />
          </div>
          <div className="w-[15px] h-[415px] bg-white border border-t-0 border-[#aaa]" />
        </div>
      </div>
      <FormatPanel />
      <Chart />
    </div>

    {/* 赤枠 */}
    <div className="absolute left-[3px] top-[47px] w-[170px] h-[38px] border-[5px] border-[#ee1c25]" />
    <div className="absolute left-[1626px] top-[156px] w-[270px] h-[675px] border-[5px] border-[#ee1c25]" />
  </div>
);

export default App;
